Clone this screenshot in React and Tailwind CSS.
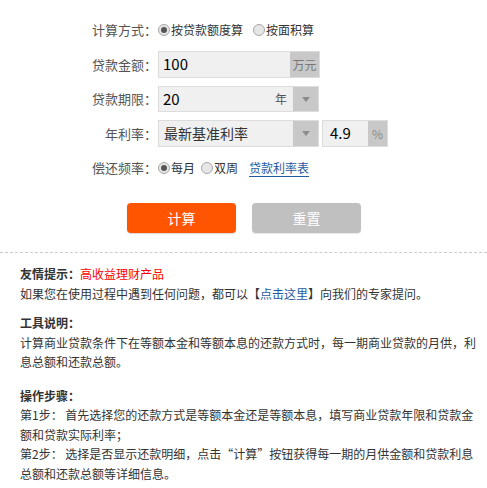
const FONT = "font-['Microsoft_YaHei','Noto_Sans_CJK_SC',sans-serif]"

function Radio({ checked, label }) {
  return (
    <span className="flex items-center text-[12px] text-[#333]">
      <span className="w-[12px] h-[12px] rounded-full border border-[#a8a8a8] bg-[#e6e6e6] flex items-center justify-center mr-[1px]">
        {checked && <span className="w-[6px] h-[6px] rounded-full bg-[#555]" />}
      </span>
      {label}
    </span>
  )
}

function Caret() {
  return (
    <div className="w-[25px] h-full bg-[#c8c8c8] flex items-center justify-center">
      <svg width="8" height="5" viewBox="0 0 8 5"><path d="M0 0 L8 0 L4 5 Z" fill="#8c8c8c" /></svg>
    </div>
  )
}

function Row({ label, children }) {
  return (
    <div className="flex items-center h-[26px]">
      <div className="w-[158px] pr-[1px] text-right text-[13px] text-[#555]">{label}</div>
      {children}
    </div>
  )
}

export default function App() {
  return (
    <div className={`w-[487px] h-[488px] bg-white overflow-hidden ${FONT}`}>
      {/* ── Form ── */}
      <div className="flex flex-col gap-[8.5px] pt-[17px]">
        <Row label="计算方式：">
          <div className="flex items-center gap-[10px]">
            <Radio checked label="按贷款额度算" />
            <Radio label="按面积算" />
          </div>
        </Row>

        <Row label="贷款金额：">
          <div className="flex w-[162px] h-[27px] border border-[#dcdcdc] bg-[#f0f0f0]">
            <div className="flex-1 flex items-center pl-[4px] text-[15px] text-black">100</div>
            <div className="w-[29px] bg-[#c8c8c8] flex items-center justify-center text-[12px] text-[#777]">万元</div>
          </div>
        </Row>

        <Row label="贷款期限：">
          <div className="flex w-[161px] h-[26px] border border-[#dcdcdc] bg-[#f0f0f0]">
            <div className="flex-1 flex items-center pl-[4px] text-[15px] text-black">20</div>
            <div className="flex items-center pr-[6px] text-[12px] text-[#555]">年</div>
            <Caret />
          </div>
        </Row>

        <Row label="年利率：">
          <div className="flex items-center gap-[3px]">
            <div className="flex w-[161px] h-[27px] border border-[#dcdcdc] bg-[#f0f0f0]">
              <div className="flex-1 flex items-center pl-[5px] text-[14px] text-[#333]">最新基准利率</div>
              <Caret />
            </div>
            <div className="flex w-[66px] h-[27px] border border-[#dcdcdc] bg-[#f0f0f0]">
              <div className="flex-1 flex items-center pl-[7px] text-[15px] text-black">4.9</div>
              <div className="w-[19px] bg-[#c8c8c8] flex items-center justify-center text-[12px] text-[#888]">%</div>
            </div>
          </div>
        </Row>

        <Row label="偿还频率：">
          <div className="flex items-center">
            <Radio checked label="每月" />
            <span className="ml-[6px]"><Radio label="双周" /></span>
            <a href="#" className="ml-[11px] text-[12px] text-[#1f5aa0] underline underline-offset-[3px]">贷款利率表</a>
          </div>
        </Row>
      </div>

      {/* ── Buttons ── */}
      <div className="flex gap-[16px] pl-[127px] mt-[22px]">
        <button className="w-[109px] h-[30px] rounded-[4px] bg-[#ff5400] text-white text-[14px] shadow-[0_1px_1px_rgba(0,0,0,0.15)]">计算</button>
        <button className="w-[109px] h-[30px] rounded-[4px] bg-[#c0c0c0] text-white text-[14px] shadow-[0_1px_1px_rgba(0,0,0,0.1)]">重置</button>
      </div>

      <div className="mt-[19px] border-t border-dashed border-[#cccccc]" />

      {/* ── Tips ── */}
      <div className="pl-[20px] pt-[11px] text-[12px] leading-[19.5px] text-[#333]">
        <div>
          <p><b className="font-bold">友情提示：</b><span className="text-[#ff0000]">高收益理财产品</span></p>
          <p>如果您在使用过程中遇到任何问题，都可以【<a href="#" className="text-[#1f5aa0]">点击这里</a>】向我们的专家提问。</p>
        </div>
        <div className="mt-[10px]">
          <p className="font-bold">工具说明：</p>
          <p>计算商业贷款条件下在等额本金和等额本息的还款方式时，每一期商业贷款的月供，利<br />息总额和还款总额。</p>
        </div>
        <div className="mt-[14px]">
          <p className="font-bold">操作步骤：</p>
          <p>第1步： 首先选择您的还款方式是等额本金还是等额本息，填写商业贷款年限和贷款金<br />额和贷款实际利率；</p>
          <p>第2步： 选择是否显示还款明细，点击“计算”按钮获得每一期的月供金额和贷款利息<br />总额和还款总额等详细信息。</p>
        </div>
      </div>
    </div>
  )
}
